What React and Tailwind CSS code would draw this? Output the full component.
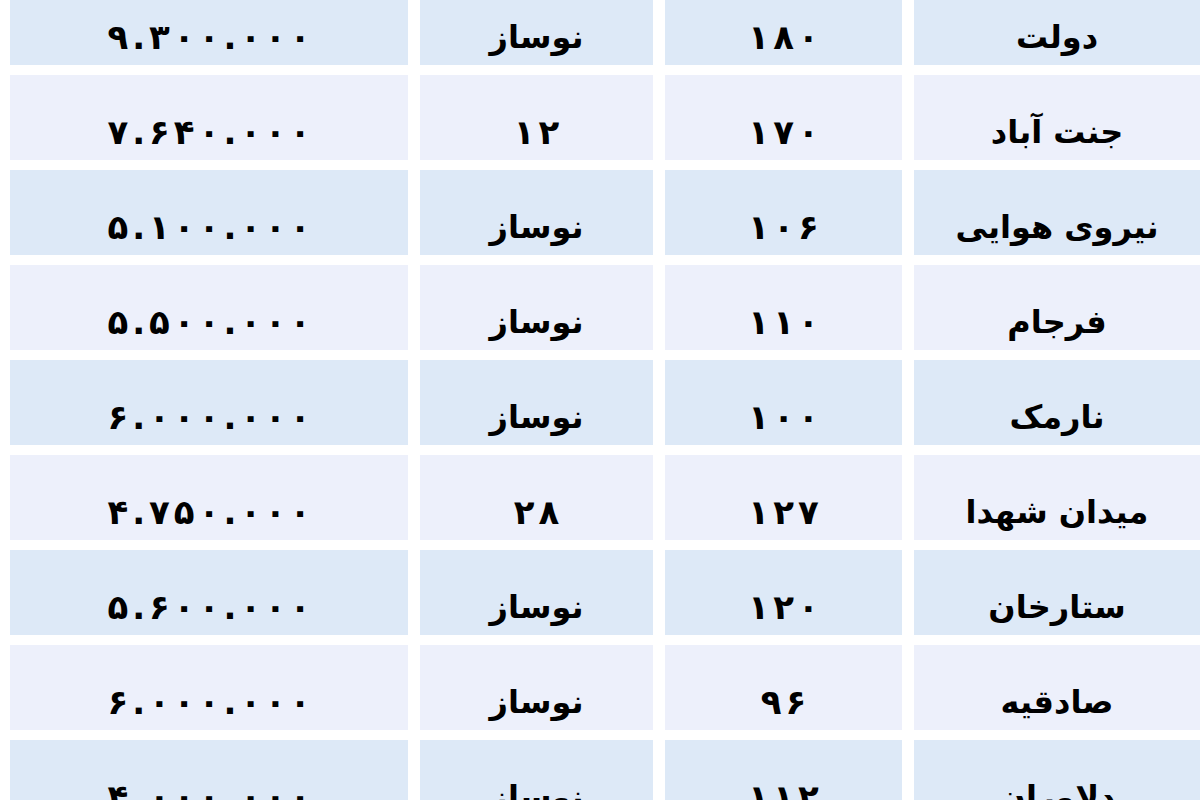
const rows = [
  ["دولت", "۱۸۰", "نوساز", "۹.۳۰۰.۰۰۰"],
  ["جنت آباد", "۱۷۰", "۱۲", "۷.۶۴۰.۰۰۰"],
  ["نیروی هوایی", "۱۰۶", "نوساز", "۵.۱۰۰.۰۰۰"],
  ["فرجام", "۱۱۰", "نوساز", "۵.۵۰۰.۰۰۰"],
  ["نارمک", "۱۰۰", "نوساز", "۶.۰۰۰.۰۰۰"],
  ["میدان شهدا", "۱۲۷", "۲۸", "۴.۷۵۰.۰۰۰"],
  ["ستارخان", "۱۲۰", "نوساز", "۵.۶۰۰.۰۰۰"],
  ["صادقیه", "۹۶", "نوساز", "۶.۰۰۰.۰۰۰"],
  ["دلاوران", "۱۱۲", "نوساز", "۴.۰۰۰.۰۰۰"],
];

const isNumber = (s) => /^[۰-۹.]+$/.test(s);

export default function App() {
  return (
    <div className="w-[1200px] h-[800px] overflow-hidden bg-white">
      <div
        dir="rtl"
        className="-mt-[20px] ml-[10px] grid grid-cols-[1fr_237px_233px_398px] gap-x-[12px] gap-y-[10px] font-['DejaVu_Sans',sans-serif] font-bold text-black"
      >
        {rows.map((r, i) =>
          r.map((cell, j) => (
            <div
              key={`${i}-${j}`}
              className={`h-[85px] flex items-center justify-center pt-[28px] leading-none ${
                i % 2 === 0 ? "bg-[#dde9f7]" : "bg-[#edf0fb]"
              }`}
            >
              {isNumber(cell) ? (
                // letter-spacing is ignored for Arabic-script digits, so space each glyph
                <span dir="ltr" className="flex text-[34px]">
                  {[...cell].map((ch, k) => (
                    <span key={k} className="px-[2px]">
                      {ch}
                    </span>
                  ))}
                </span>
              ) : (
                <span className="text-[32px]">{cell}</span>
              )}
            </div>
          ))
        )}
      </div>
    </div>
  );
}
